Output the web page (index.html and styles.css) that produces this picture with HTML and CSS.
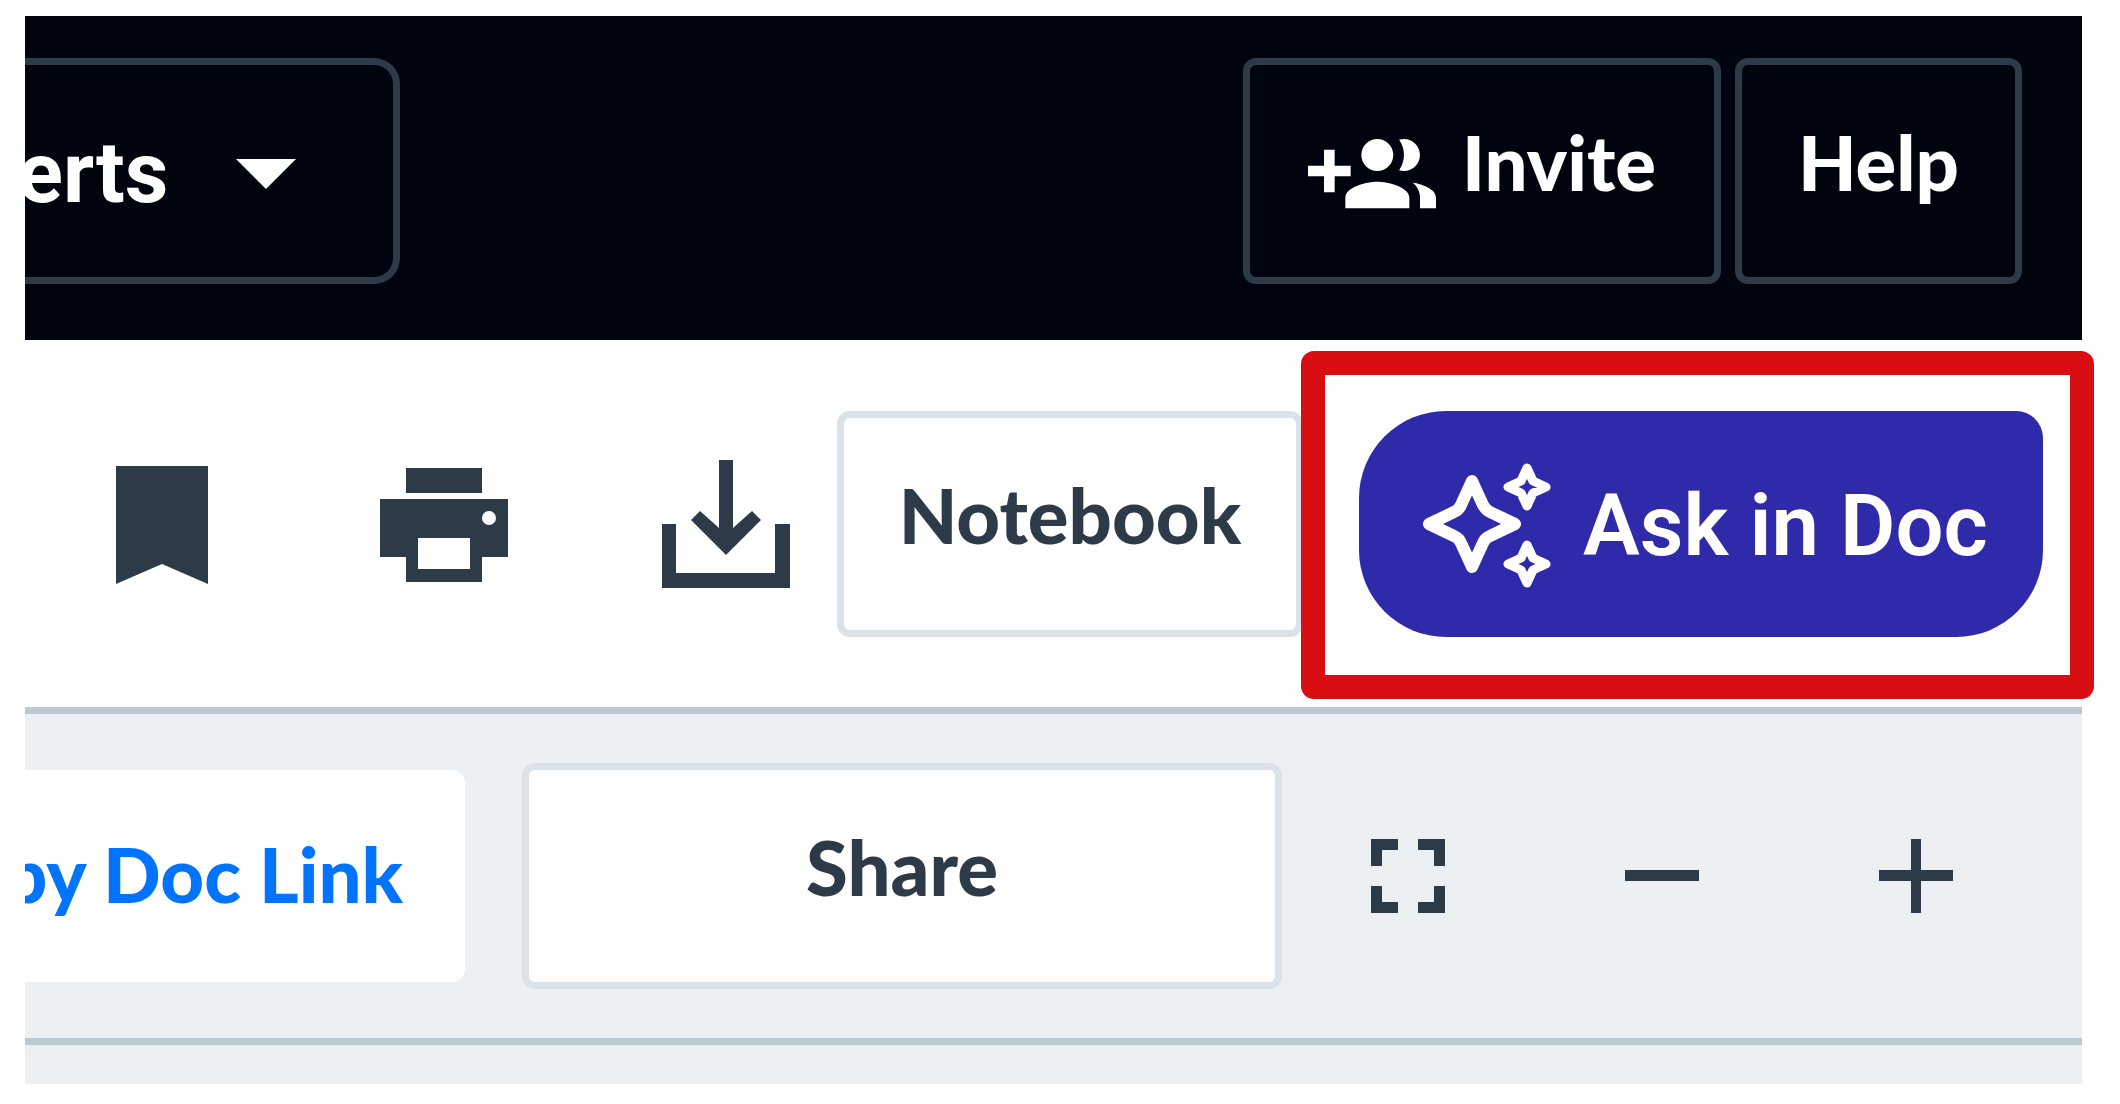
FILE: index.html
```html
<!DOCTYPE html>
<html lang="en">

    <head>
        <meta charset="utf-8">
        <title>Document Viewer</title>
        <meta name="viewport" content="width=device-width, initial-scale=1.0">
        <link rel="stylesheet" href="styles.css">
    </head>

    <body>
        <header class="topbar">
            <div class="picker">
                <select aria-label="Content set">
                    <option>erts</option>
                </select>
                <svg class="caret" viewBox="0 0 60 30" aria-hidden="true">
                    <path d="M0 0h60L30 30z" />
                </svg>
            </div>
            <div class="topbar-actions">
                <button type="button" class="btn btn-dark btn-invite">
                    <svg class="icon" viewBox="0 -1 24 24" aria-hidden="true">
                        <path
                            d="M8 10H5V7H3v3H0v2h3v3h2v-3h3v-2zm10 1c1.66 0 2.99-1.34 2.99-3S19.66 5 18 5c-.32 0-.63.05-.91.14.57.81.9 1.79.9 2.86s-.34 2.04-.9 2.86c.28.09.59.14.91.14zm-5 0c1.66 0 2.99-1.34 2.99-3S14.66 5 13 5c-1.66 0-3 1.34-3 3s1.34 3 3 3zm6.62 2.16c.83.73 1.38 1.66 1.38 2.84v2h3v-2c0-1.54-2.37-2.49-4.38-2.84zM13 13c-2 0-6 1-6 3v2h12v-2c0-2-4-3-6-3z" />
                    </svg>
                    <span>Invite</span>
                </button>
                <button type="button" class="btn btn-dark btn-help"><span>Help</span></button>
            </div>
        </header>

        <div class="toolbar">
            <div class="toolbar-icons">
                <button type="button" class="icon-btn" aria-label="Bookmark">
                    <svg class="icon" viewBox="0 0 128 128">
                        <path d="M18 6h92v118L64 104l-46 20z" />
                    </svg>
                </button>
                <button type="button" class="icon-btn" aria-label="Print">
                    <svg class="icon" viewBox="0 0 128 128">
                        <path fill-rule="evenodd"
                            d="M26 8h76v25H26zM0 39h128v58h-26v25H26V97H0zM38 78v31h52V78zM102 58a7 7 0 1 0 14 0 7 7 0 1 0-14 0z" />
                    </svg>
                </button>
                <button type="button" class="icon-btn" aria-label="Download">
                    <svg class="icon" viewBox="0 0 128 128">
                        <path
                            d="M0 64h14v49h99V64h15v64H0zM57 0h14v68l19-17 9 9-35 35-35-35 9-9 19 17z" />
                    </svg>
                </button>
            </div>
            <button type="button" class="btn btn-light btn-notebook"><span>Notebook</span></button>
            <div class="highlight">
                <button type="button" class="btn-ask">
                    <svg class="icon" viewBox="0 0 128 128" aria-hidden="true">
                        <path class="star-big"
                            d="M49 19l11 24q3 5 7 7l25 12-25 12q-5 2-7 7L49 105 38 81q-2-5-7-7L6 62l25-12q5-2 7-7z" />
                        <path class="star-small"
                            d="M104 6l6 13 13 6-13 6-6 13-6-13-13-6 13-6zM104 83l6 13 13 6-13 6-6 13-6-13-13-6 13-6z" />
                    </svg>
                    <span>Ask in Doc</span>
                </button>
            </div>
        </div>

        <div class="docbar">
            <a class="doc-link" href="#"><span>py Doc Link</span></a>
            <button type="button" class="btn btn-light btn-share"><span>Share</span></button>
            <div class="zoom">
                <button type="button" class="icon-btn" aria-label="Full screen">
                    <svg class="icon-sm" viewBox="0 0 74 74">
                        <path d="M0 0h27v11H11v16H0zM47 0h27v27H63V11H47zM0 47h11v16h16v11H0zM63 47h11v27H47V63h16z" />
                    </svg>
                </button>
                <button type="button" class="icon-btn" aria-label="Zoom out">
                    <svg class="icon-sm" viewBox="0 0 74 74">
                        <path d="M0 31h74v11H0z" />
                    </svg>
                </button>
                <button type="button" class="icon-btn" aria-label="Zoom in">
                    <svg class="icon-sm" viewBox="0 0 74 74">
                        <path d="M32 0h10v31h32v11H42v32H32V42H0V31h32z" />
                    </svg>
                </button>
            </div>
        </div>
        <main class="document"></main>
    </body>

</html>
```

FILE: styles.css
```css
* {
    box-sizing: border-box;
}

body {
    margin: 0;
    padding: 16px 38px 20px 25px;
    background: #fff;
    color: #2d3a47;
    font-family: Lato, sans-serif;
    font-size: 76px;
    font-weight: 900;
    line-height: 92px;
}

button,
select {
    margin: 0;
    padding: 0;
    border: 0;
    background: none;
    color: inherit;
    font: inherit;
}

svg {
    display: block;
    flex: none;
    fill: currentColor;
}

.icon {
    width: 128px;
    height: 128px;
}

.icon-sm {
    width: 74px;
    height: 74px;
}

/* buttons */
.btn {
    display: flex;
    align-items: center;
    justify-content: center;
    gap: 26px;
    height: 226px;
    border: 7px solid;
    border-radius: 13px;
    white-space: nowrap;
}

.btn span {
    padding-bottom: 18px;
}

.btn-dark {
    border-color: #2d3a47;
}

.btn-light {
    border-color: #dbe3e8;
    background: #fff;
    color: #2d3a47;
}

/* top bar */
.topbar {
    display: flex;
    justify-content: space-between;
    padding: 42px 60px 56px 0;
    background: #00040f;
    color: #fff;
}

.picker {
    position: relative;
    width: 375px;
    height: 226px;
    border: 7px solid #2d3a47;
    border-left: 0;
    border-radius: 0 26px 26px 0;
    overflow: hidden;
}

.picker select {
    width: 100%;
    height: 100%;
    padding-top: 4px;
    appearance: none;
    font-family: Roboto, sans-serif;
    font-size: 85px;
    font-weight: 700;
    line-height: 104px;
    text-indent: -8px;
}

.caret {
    position: absolute;
    top: 94px;
    right: 97px;
    width: 60px;
    height: 30px;
    pointer-events: none;
}

.topbar-actions {
    display: flex;
    gap: 14px;
}

.btn-invite {
    width: 478px;
}

.btn-help {
    width: 287px;
}

/* toolbar */
.toolbar {
    display: flex;
    align-items: center;
    justify-content: flex-end;
    padding: 71px 39px 70px 0;
}

.toolbar-icons {
    display: flex;
    gap: 154px;
    margin-right: 47px;
}

.btn-notebook {
    width: 466px;
    margin-right: 56px;
}

.highlight {
    position: relative;
}

.highlight::after {
    content: "";
    position: absolute;
    inset: -60px -51px -62px -58px;
    border: 24px solid #d90e13;
    border-radius: 13px;
    pointer-events: none;
}

.btn-ask {
    display: flex;
    align-items: center;
    gap: 32px;
    width: 684px;
    height: 226px;
    padding: 4px 0 0 64px;
    border-radius: 87px 27px 87px 87px;
    background: #2f2aa9;
    color: #fff;
    font-family: Roboto, sans-serif;
    font-size: 85px;
    font-weight: 600;
    line-height: 104px;
    white-space: nowrap;
}

.star-big,
.star-small {
    fill: none;
    stroke: #fff;
    stroke-linejoin: round;
}

.star-big {
    stroke-width: 12px;
}

.star-small {
    stroke-width: 9px;
}

/* document bar */
.docbar {
    display: flex;
    align-items: center;
    padding: 49px 129px 49px 0;
    border-top: 7px solid #bcc9d1;
    border-bottom: 7px solid #bcc9d1;
    background: #ecf0f3;
}

.doc-link {
    display: flex;
    align-items: center;
    justify-content: flex-end;
    width: 440px;
    height: 212px;
    padding-right: 62px;
    border-radius: 0 13px 13px 0;
    background: #fff;
    color: #0073ff;
    text-decoration: none;
    white-space: nowrap;
    overflow: hidden;
}

.doc-link span {
    padding-bottom: 4px;
}

.btn-share {
    width: 760px;
    margin-left: 57px;
}

.zoom {
    display: flex;
    gap: 180px;
    margin-left: auto;
}

.document {
    height: 39px;
    background: #ecf0f3;
}
```
